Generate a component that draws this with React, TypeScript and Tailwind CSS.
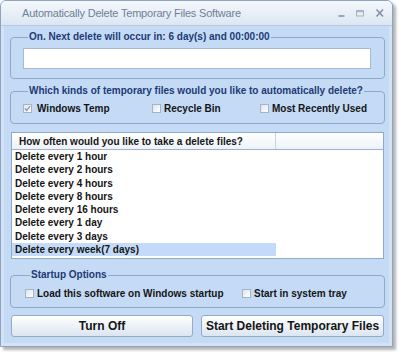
import React from 'react';

const items = [
  'Delete every 1 hour',
  'Delete every 2 hours',
  'Delete every 4 hours',
  'Delete every 8 hours',
  'Delete every 16 hours',
  'Delete every 1 day',
  'Delete every 3 days',
  'Delete every week(7 days)',
];

const Check: React.FC<{ checked?: boolean }> = ({ checked }) => (
  <span className="w-[9px] h-[9px] shrink-0 border border-[#a5b3c5] bg-gradient-to-br from-[#dfe5ec] to-white flex items-center justify-center">
    {checked && (
      <svg width="7" height="7" viewBox="0 0 7 7">
        <path d="M1 3.5 L2.8 5.5 L6 1.2" stroke="#8d97a6" strokeWidth="1.3" fill="none" />
      </svg>
    )}
  </span>
);

const Group: React.FC<{ label: string; className?: string; children: React.ReactNode }> = ({ label, className, children }) => (
  <fieldset className={`border border-[#8ea9cb] rounded-[4px] ${className ?? ''}`}>
    <legend className="ml-[5px] px-[1px] text-[10px] leading-[12px] font-bold text-[#1d3b74]">{label}</legend>
    {children}
  </fieldset>
);

const App: React.FC = () => {
  return (
    <div className="w-[400px] h-[352px] bg-white font-['Liberation_Sans',Arial,sans-serif] overflow-hidden">
      <div className="w-[393px] h-[347px] flex flex-col border border-[#8da3c0] rounded-t-[6px] bg-[#c4daf5] shadow-[3px_3px_3px_rgba(0,0,0,0.3)] overflow-hidden">
        {/* Title bar */}
        <div className="h-[25px] shrink-0 flex items-center bg-gradient-to-b from-[#f5f8fc] to-[#dce6f2] border-b border-[#b7c9df]">
          <span className="pl-[21px] text-[11px] tracking-[-0.2px] text-[#6f8096]">
            Automatically Delete Temporary Files Software
          </span>
          <div className="ml-auto flex items-center pr-[6px]">
            <svg width="10" height="10" viewBox="0 0 10 10">
              <path d="M1.5 8 H7.5" stroke="#7f8ea3" strokeWidth="1.4" />
            </svg>
            <svg width="10" height="10" viewBox="0 0 10 10" className="ml-[8px]">
              <rect x="1.5" y="2.5" width="7" height="5.5" stroke="#a9b5c5" strokeWidth="1" fill="none" />
              <path d="M1.5 3.5 H8.5" stroke="#a9b5c5" strokeWidth="1.4" />
            </svg>
            <svg width="12" height="10" viewBox="0 0 12 10" className="ml-[9px]">
              <path d="M2.5 1.5 L9 8.5 M9 1.5 L2.5 8.5" stroke="#7f8ea3" strokeWidth="1.5" />
            </svg>
          </div>
        </div>

        {/* Body */}
        <div className="flex-1 flex flex-col pl-[9px] pr-[7px] pt-[5px] shadow-[inset_3px_0_0_#d3e2f5,inset_-3px_0_0_#d3e2f5,inset_0_-3px_0_#d3e2f5]">
          <Group label="On. Next delete will occur in: 6 day(s) and 00:00:00" className="pl-[12px] pr-[13px] pt-[5px] pb-[9px]">
            <div className="h-[21px] bg-white border border-[#a7bad2]" />
          </Group>

          <Group label="Which kinds of temporary files would you like to automatically delete?" className="mt-[6px] pl-[12px] pt-[5px] pb-[9px]">
            <div className="flex items-center h-[12px] text-[10px] font-bold text-[#151515]">
              <div className="w-[129px] flex items-center gap-[5px]">
                <Check checked />
                <span>Windows Temp</span>
              </div>
              <div className="w-[108px] flex items-center gap-[3px]">
                <Check />
                <span>Recycle Bin</span>
              </div>
              <div className="flex items-center gap-[3px]">
                <Check />
                <span>Most Recently Used</span>
              </div>
            </div>
          </Group>

          {/* List */}
          <div className="mt-[8px] ml-[1px] mr-[1px] h-[127px] bg-white border border-[#8ea9cb] flex flex-col">
            <div className="h-[17px] shrink-0 flex bg-gradient-to-b from-white to-[#eef2f7] border-b border-[#9cb2cd] text-[10px] font-bold text-[#151515]">
              <div className="w-[264px] border-r border-[#c6d3e3] flex items-center pl-[7px] whitespace-nowrap">
                How often would you like to take a delete files?
              </div>
            </div>
            <div className="flex flex-col text-[10px] font-bold text-[#151515]">
              {items.map((t, i) => (
                <div
                  key={t}
                  className={`w-[264px] h-[13.25px] leading-[13.25px] pl-[3px] whitespace-nowrap ${i === items.length - 1 ? 'bg-[#c3dbf8]' : ''}`}
                >
                  {t}
                </div>
              ))}
            </div>
          </div>

          <Group label="Startup Options" className="mt-[10px] pl-[14px] pt-[6px] pb-[8px]">
            <div className="flex items-center h-[12px] text-[10px] font-bold text-[#151515]">
              <div className="w-[217px] flex items-center gap-[3px]">
                <Check />
                <span>Load this software on Windows startup</span>
              </div>
              <div className="flex items-center gap-[3px]">
                <Check />
                <span>Start in system tray</span>
              </div>
            </div>
          </Group>

          <div className="mt-[7px] ml-[1px] mr-[1px] flex gap-[8px]">
            <button className="w-[182px] h-[22px] rounded-[3px] border border-[#95aac6] bg-gradient-to-b from-white to-[#dbe5f1] text-[12px] font-bold text-[#151515]">
              Turn Off
            </button>
            <button className="flex-1 h-[22px] rounded-[3px] border border-[#95aac6] bg-gradient-to-b from-white to-[#dbe5f1] text-[12px] font-bold text-[#151515] whitespace-nowrap">
              Start Deleting Temporary Files
            </button>
          </div>
        </div>
      </div>
    </div>
  );
};

export default App;
